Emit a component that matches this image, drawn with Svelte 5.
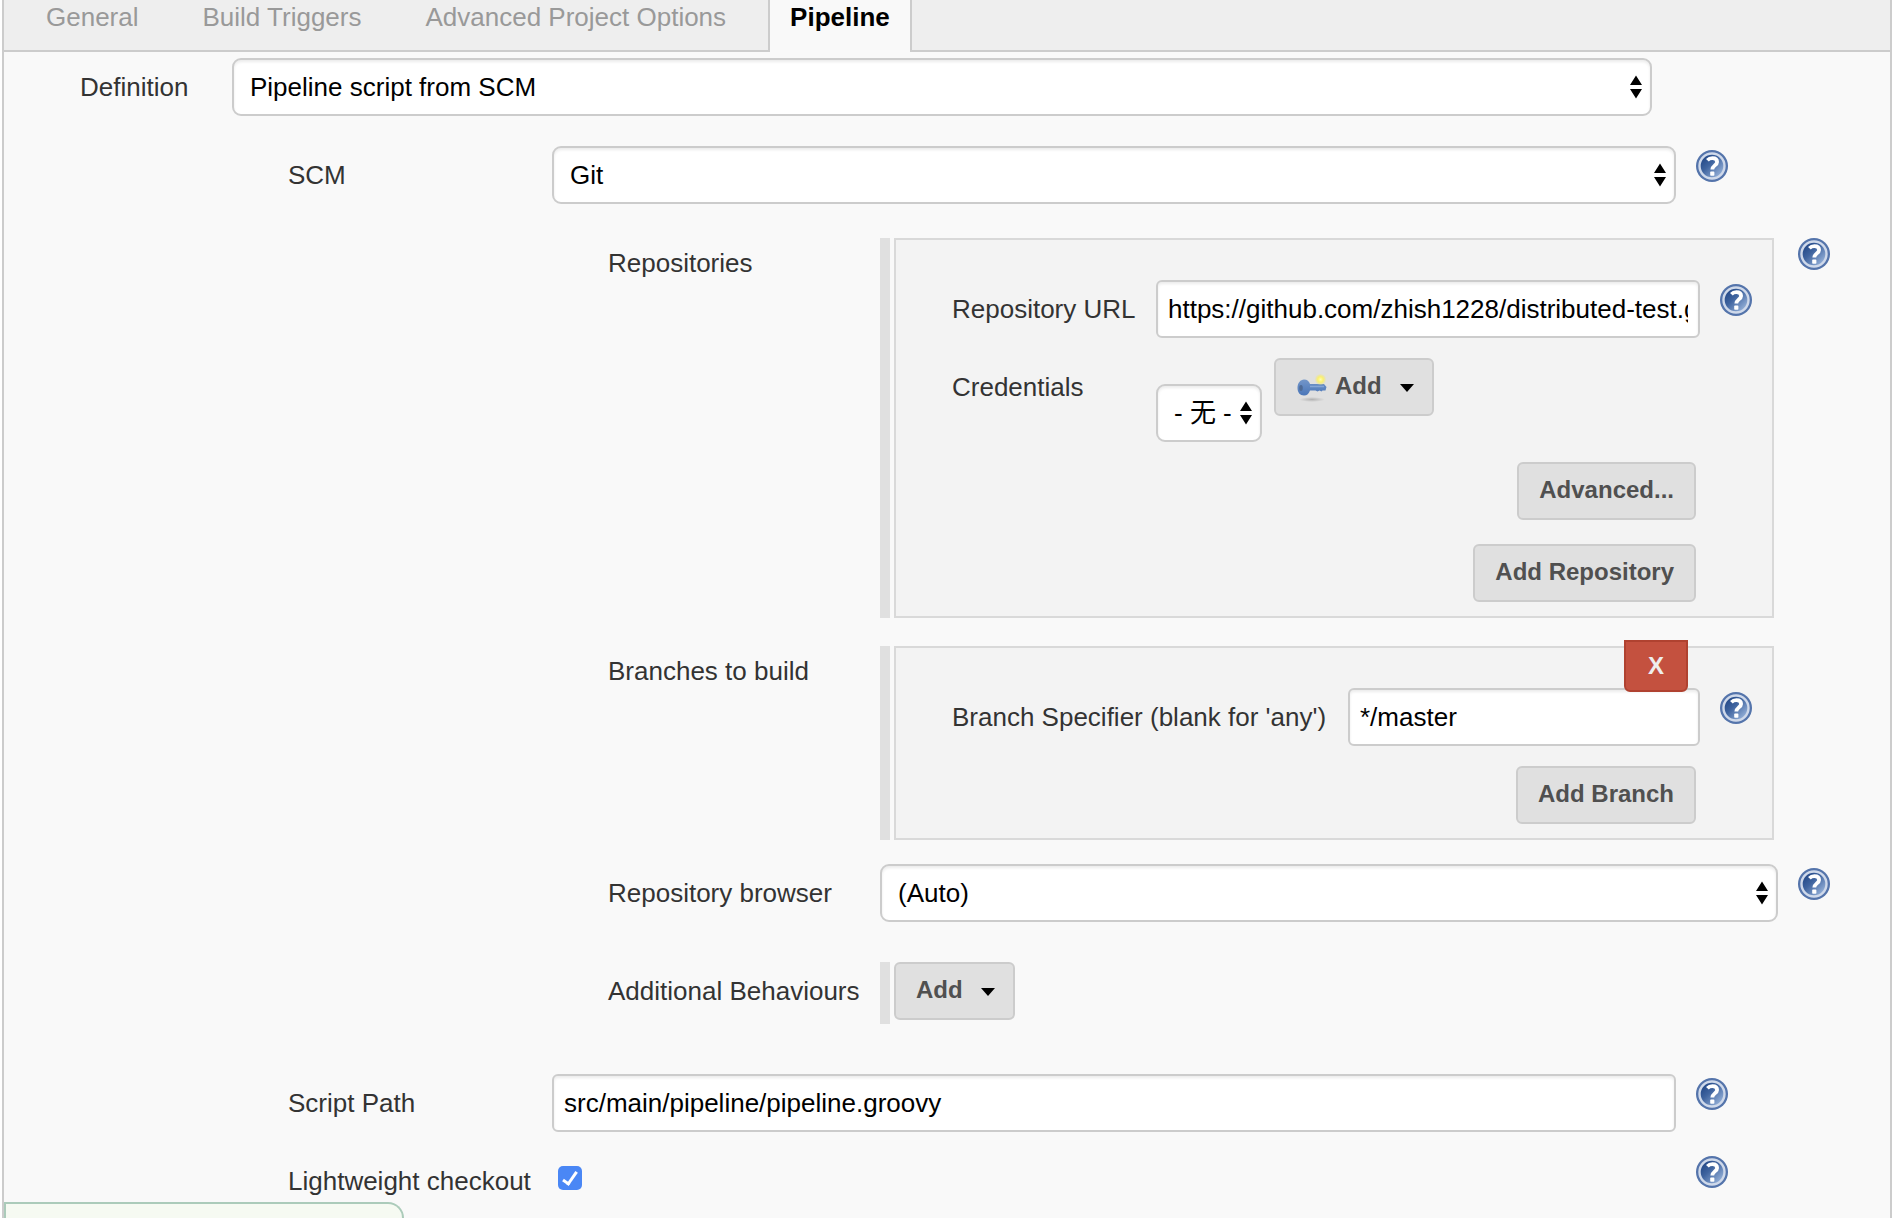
<script>
  let definition = $state('scm');
  let scm = $state('git');
  let credentials = $state('none');
  let browser = $state('auto');
  let repositoryUrl = $state('https://github.com/zhish1228/distributed-test.git');
  let branch = $state('*/master');
  let scriptPath = $state('src/main/pipeline/pipeline.groovy');
  let lightweight = $state(true);
  let active = $state('Pipeline');
  const tabs = ['General', 'Build Triggers', 'Advanced Project Options', 'Pipeline'];
</script>

{#snippet help(topic)}
  <a class="help" href="#help" aria-label={'Help for ' + topic}>
    <svg viewBox="0 0 32 32" width="32" height="32" aria-hidden="true">
      <defs>
        <linearGradient id="help-fill" x1="0.1" y1="0.1" x2="0.9" y2="0.9">
          <stop offset="0" stop-color="#1f4484" />
          <stop offset="0.4" stop-color="#3f649f" />
          <stop offset="1" stop-color="#9db8de" />
        </linearGradient>
      </defs>
      <circle cx="16" cy="16" r="16" fill="#5474ab" />
      <circle cx="16" cy="16" r="12.5" fill="url(#help-fill)" stroke="#cfd9ea" stroke-width="2.4" />
      <path d="M11.4 10.2C12.9 8.600 14.600 8.200 16.400 8.200c2.800 0 4.700 1.300 4.700 3.700 0 3.400-4.800 3.600-4.800 7.600" fill="none" stroke="#fff" stroke-width="3.800" />
      <rect x="14.2" y="21.6" width="4.200" height="4.200" rx="0.8" fill="#fff" />
    </svg>
  </a>
{/snippet}

{#snippet arrows()}
  <svg class="arrows" viewBox="0 0 12 24" width="12" height="24" aria-hidden="true">
    <path d="M6 0.500l6 9.500H0zM6 23.500l6-9.500H0z" />
  </svg>
{/snippet}

{#snippet caret()}
  <svg class="caret" viewBox="0 0 14 8" width="14" height="8" aria-hidden="true"><path d="M0 0h14L7 8z" /></svg>
{/snippet}

<main class="panel">
  <div class="tabs" role="tablist">
    {#each tabs as tab}
      <button class="tab" class:active={tab === active} role="tab" aria-selected={tab === active} onclick={() => (active = tab)}>{tab}</button>
    {/each}
  </div>

  <form class="form" onsubmit={(e) => e.preventDefault()}>
    <div class="row definition">
      <label for="definition">Definition</label>
      <div class="select">
        <select id="definition" bind:value={definition}>
          <option value="scm">Pipeline script from SCM</option>
          <option value="inline">Pipeline script</option>
        </select>
        {@render arrows()}
      </div>
    </div>

    <div class="row main">
      <label for="scm">SCM</label>
      <div class="select">
        <select id="scm" bind:value={scm}>
          <option value="git">Git</option>
          <option value="none">None</option>
        </select>
        {@render arrows()}
      </div>
      {@render help('SCM')}
    </div>

    <section class="nested">
      <div class="row sub repositories">
        <span class="group-label">Repositories</span>
        <div class="group">
          <div class="box">
            <div class="row field">
              <label for="url">Repository URL</label>
              <input id="url" type="text" bind:value={repositoryUrl} />
              {@render help('Repository URL')}
            </div>
            <div class="row field">
              <label for="credentials">Credentials</label>
              <div class="credentials">
                <div class="select small">
                  <select id="credentials" bind:value={credentials}>
                    <option value="none">- 无 -</option>
                  </select>
                  {@render arrows()}
                </div>
                <button class="btn menu" type="button">
                  <svg class="key" viewBox="0 0 32 32" width="32" height="32" aria-hidden="true">
                    <defs>
                      <radialGradient id="key-shadow">
                        <stop offset="0" stop-color="#000" stop-opacity="0.2" />
                        <stop offset="1" stop-color="#000" stop-opacity="0" />
                      </radialGradient>
                      <radialGradient id="key-glow">
                        <stop offset="0" stop-color="#fffcae" />
                        <stop offset="0.5" stop-color="#faf070" />
                        <stop offset="1" stop-color="#f0e680" stop-opacity="0.2" />
                      </radialGradient>
                      <linearGradient id="key-body" x1="0" y1="0" x2="0" y2="1">
                        <stop offset="0" stop-color="#7396c9" />
                        <stop offset="1" stop-color="#4a76b8" />
                      </linearGradient>
                    </defs>
                    <ellipse cx="16" cy="29.500" rx="13" ry="2.500" fill="url(#key-shadow)" />
                    <path d="M1.500 18c0-5 3-8.500 6.500-8.500 3.200 0 5.200 1.800 6 4.500h14l2.500 3-1 3.500h-3l-1 1-2-1-2 1-2-1h-5.500c-1 3-3 5-6 5-4 0-6.500-3-6.500-7.500z" fill="url(#key-body)" />
                    <ellipse cx="5" cy="18" rx="1.800" ry="3" fill="#4f6b96" />
                    <path d="M14 16.500h14" stroke="#86a6d6" stroke-width="1.500" />
                    <circle cx="24.500" cy="9.500" r="5.500" fill="url(#key-glow)" />
                  </svg>
                  <span>Add</span>
                  {@render caret()}
                </button>
              </div>
            </div>
            <div class="actions">
              <button class="btn" type="button">Advanced...</button>
              <button class="btn" type="button">Add Repository</button>
            </div>
          </div>
        </div>
        {@render help('Repositories')}
      </div>

      <div class="row sub branches">
        <span class="group-label">Branches to build</span>
        <div class="group">
          <div class="box">
            <button class="delete" type="button" aria-label="Delete branch">X</button>
            <div class="row field wide">
              <label for="branch">Branch Specifier (blank for 'any')</label>
              <input id="branch" type="text" bind:value={branch} />
              {@render help('Branch Specifier')}
            </div>
            <div class="actions">
              <button class="btn" type="button">Add Branch</button>
            </div>
          </div>
        </div>
      </div>

      <div class="row sub">
        <label for="browser">Repository browser</label>
        <div class="select">
          <select id="browser" bind:value={browser}>
            <option value="auto">(Auto)</option>
          </select>
          {@render arrows()}
        </div>
        {@render help('Repository browser')}
      </div>

      <div class="row sub behaviours">
        <span class="row-label">Additional Behaviours</span>
        <div class="group">
          <button class="btn menu" type="button"><span>Add</span>{@render caret()}</button>
        </div>
      </div>
    </section>

    <div class="row main">
      <label for="script-path">Script Path</label>
      <input id="script-path" type="text" bind:value={scriptPath} />
      {@render help('Script Path')}
    </div>

    <div class="row main last">
      <label for="lightweight">Lightweight checkout</label>
      <input id="lightweight" type="checkbox" bind:checked={lightweight} />
      {@render help('Lightweight checkout')}
    </div>
  </form>
</main>
<div class="save-bar"></div>

<style>
  :global(body) {
    margin: 0;
    background: #fff;
  }
  .panel,
  button,
  input,
  select {
    font-family: 'Liberation Sans', Arial, 'Noto Sans CJK SC', sans-serif;
    font-size: 26px;
    box-sizing: border-box;
  }
  .panel {
    min-height: 100vh;
    margin: 0 12px 0 2px;
    border: solid #ccc;
    border-width: 0 2px;
    background: #f9f9f9;
    color: #333;
  }
  .tabs {
    display: flex;
    gap: 20px;
    height: 52px;
    box-sizing: border-box;
    padding-left: 20px;
    border-bottom: 2px solid #ccc;
    background: #eee;
  }
  .tab {
    height: 52px;
    padding: 0 20px 18px;
    border: solid transparent;
    border-width: 0 2px;
    background: none;
    color: #999;
    line-height: 34px;
    white-space: nowrap;
  }
  .tab.active {
    border-color: #ccc;
    background: #f9f9f9;
    color: #000;
    font-weight: bold;
  }
  .form {
    padding-top: 6px;
  }
  .row {
    display: grid;
    column-gap: 20px;
    align-items: start;
  }
  label,
  .row-label,
  .group-label {
    line-height: 58px;
    white-space: nowrap;
  }
  .group-label {
    line-height: 50px;
  }
  .definition {
    grid-template-columns: 132px minmax(0, 1fr);
    padding: 0 238px 30px 76px;
  }
  .main {
    grid-template-columns: 244px minmax(0, 1fr) 32px;
    padding: 0 162px 0 284px;
  }
  .nested {
    display: grid;
    gap: 28px;
    padding: 34px 60px 50px 604px;
  }
  .sub {
    grid-template-columns: 252px minmax(0, 1fr) 32px;
  }
  .branches {
    margin-bottom: -4px;
  }
  .behaviours {
    margin-top: 12px;
  }
  .last {
    margin-top: 20px;
  }
  .group {
    min-width: 0;
    padding-left: 4px;
    border-left: 10px solid #e0e0e0;
  }
  .behaviours .group {
    padding-bottom: 4px;
  }
  .box {
    position: relative;
    display: grid;
    gap: 20px;
    margin-right: 4px;
    padding: 40px 20px 14px 56px;
    border: 2px solid #d9d9d9;
    background: #f3f3f3;
  }
  .field {
    grid-template-columns: 184px minmax(0, 1fr) 32px;
  }
  .field.wide {
    grid-template-columns: 376px minmax(0, 1fr) 32px;
  }
  input[type='text'],
  select {
    width: 100%;
    height: 58px;
    margin: 0;
    border: 2px solid #ccc;
    background: #fff;
    box-shadow: inset 0 2px 3px rgba(0, 0, 0, 0.08);
    color: #000;
  }
  input[type='text'] {
    padding: 0 10px;
    border-radius: 6px;
  }
  select {
    display: block;
    padding: 0 32px 0 16px;
    border-radius: 9px;
    appearance: none;
  }
  .select {
    position: relative;
  }
  .arrows {
    position: absolute;
    top: 17px;
    right: 10px;
    pointer-events: none;
  }
  .select.small {
    width: 106px;
    margin-top: 26px;
  }
  .small select {
    padding-right: 20px;
  }
  .credentials {
    display: flex;
    gap: 12px;
    align-items: flex-start;
  }
  .help {
    display: block;
    height: 32px;
    margin-top: 4px;
  }
  .repositories > .help {
    margin-top: 0;
  }
  .help svg {
    display: block;
  }
  .btn {
    height: 58px;
    padding: 0 20px 2px;
    border: 2px solid #ccc;
    border-radius: 6px;
    background: #e0e0e0;
    color: #505050;
    font-size: 24px;
    font-weight: bold;
    white-space: nowrap;
  }
  .menu {
    display: flex;
    align-items: center;
    padding-right: 18px;
  }
  .key {
    margin-right: 7px;
  }
  .caret {
    margin-top: 4px;
    margin-left: 18px;
    fill: #000;
  }
  .actions {
    display: flex;
    flex-direction: column;
    gap: 24px;
    align-items: flex-end;
    padding-right: 56px;
  }
  .delete {
    position: absolute;
    top: -8px;
    right: 84px;
    width: 64px;
    height: 52px;
    padding: 0;
    border: 2px solid #b04230;
    border-radius: 0 0 6px 6px;
    background: #c4513f;
    color: #eee;
    font-size: 24px;
    font-weight: bold;
  }
  input[type='checkbox'] {
    width: 24px;
    height: 24px;
    margin: 14px 0 0 6px;
    appearance: none;
    border-radius: 5px;
    background: #fff;
    box-shadow: inset 0 0 0 2px #bbb;
    display: grid;
    place-items: center;
  }
  input[type='checkbox']:checked {
    background: #4a87f5;
    box-shadow: none;
  }
  input[type='checkbox']:checked::before {
    content: '';
    width: 5px;
    height: 13px;
    margin-bottom: 3px;
    border: solid #fff;
    border-width: 0 3px 3px 0;
    transform: rotate(35deg);
  }
  .save-bar {
    position: fixed;
    bottom: 0;
    left: 4px;
    width: 400px;
    height: 16px;
    box-sizing: border-box;
    border: 2px solid #abcbba;
    border-bottom: 0;
    border-radius: 0 20px 0 0;
    background: #f6faf2;
  }
</style>
